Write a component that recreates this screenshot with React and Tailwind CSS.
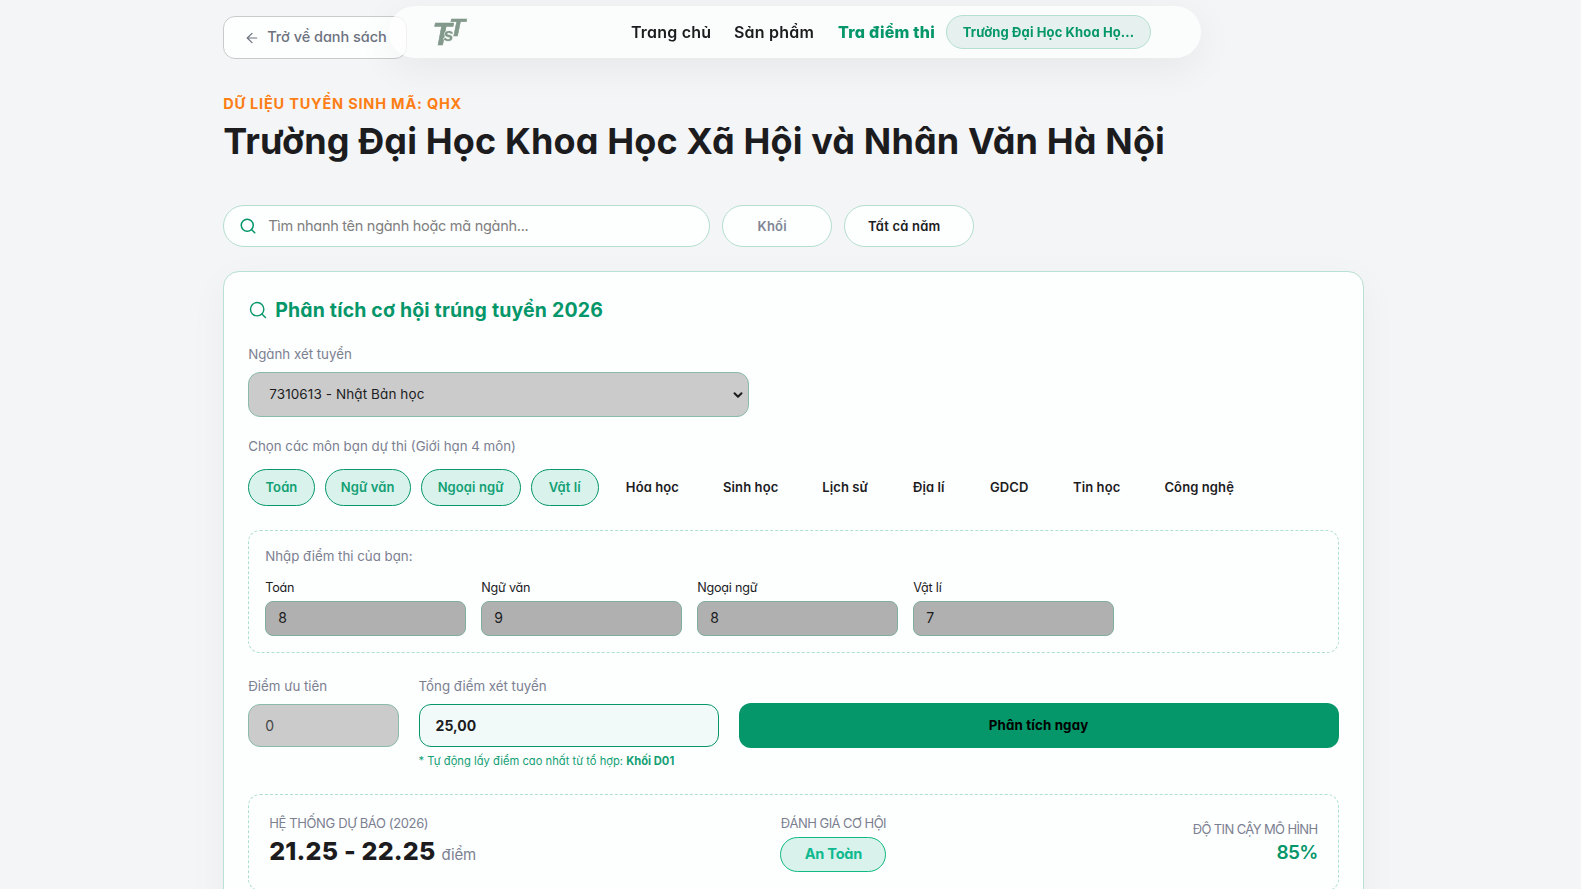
import { useState } from 'react';
import { ArrowLeft, ChevronDown, Search } from 'lucide-react';

const subjects = [
  { name: 'Toán', width: 'w-[66.5px]' },
  { name: 'Ngữ văn', width: 'w-[86px]' },
  { name: 'Ngoại ngữ', width: 'w-[100px]' },
  { name: 'Vật lí', width: 'w-[68px]' },
  { name: 'Hóa học', width: 'w-[87.5px]' },
  { name: 'Sinh học', width: 'w-[89px]' },
  { name: 'Lịch sử', width: 'w-[80px]' },
  { name: 'Địa lí', width: 'w-[67px]' },
  { name: 'GDCD', width: 'w-[74px]' },
  { name: 'Tin học', width: 'w-[81px]' },
  { name: 'Công nghệ', width: 'w-[104px]' },
];

const scores = [
  { name: 'Toán', value: '8' },
  { name: 'Ngữ văn', value: '9' },
  { name: 'Ngoại ngữ', value: '8' },
  { name: 'Vật lí', value: '7' },
];

function Logo() {
  return (
    <svg
      width="44"
      height="44"
      viewBox="0 0 44 44"
      fill="#82998b"
      fontFamily="Liberation Sans, sans-serif"
      fontWeight="700"
      fontStyle="italic"
    >
      <text x="3.5" y="34.5" fontSize="32" stroke="#82998b" strokeWidth="0.7" textLength="19" lengthAdjust="spacingAndGlyphs">T</text>
      <text x="20" y="26" fontSize="24" stroke="#82998b" strokeWidth="0.5" textLength="16" lengthAdjust="spacingAndGlyphs">T</text>
      <text x="14.5" y="31" fontSize="18" stroke="#e3eae5" strokeWidth="1.2" paintOrder="stroke">s</text>
    </svg>
  );
}

function Navbar() {
  return (
    <header className="fixed left-[389px] top-[6px] z-10 flex h-[52px] w-[812px] items-center rounded-full bg-[#fdfdfd]/75 pl-[40px] shadow-[0_10px_40px_rgba(0,0,0,0.06)]">
      <Logo />
      <nav className="ml-[158px] flex items-center whitespace-nowrap text-[16px] font-[580] leading-6 text-[#1c1c1e]">
        <a className="w-[103px] tracking-[0.2px]">Trang chủ</a>
        <a className="w-[104px] tracking-[0.2px]">Sản phẩm</a>
        <a className="w-[108px] font-extrabold tracking-[0.25px] text-[#059669]">Tra điểm thi</a>
        <a className="flex h-[34px] w-[205px] items-center justify-center rounded-full border border-[#b4dfd0] bg-[#e6f1ef] pb-px text-[13px] font-bold tracking-[0.12px] text-[#059669]">
          Trường Đại Học Khoa Họ...
        </a>
      </nav>
    </header>
  );
}

function Filters() {
  return (
    <div className="mt-[38px] flex h-[42px] gap-3">
      <div className="flex w-[486.5px] items-center gap-[11px] rounded-full border border-[#b4dfd0] bg-[#fdfefe] pl-[15px]">
        <Search size={18} strokeWidth={2} className="text-[#059669]" />
        <span className="text-[14.5px] tracking-[-0.28px] text-[#808080]">Tìm nhanh tên ngành hoặc mã ngành...</span>
      </div>
      <button className="w-[110px] rounded-full border border-[#b4dfd0] bg-[#fdfefe] pr-[9px] pt-px text-[13px] font-semibold tracking-[0.2px] text-[#808596]">
        Khối
      </button>
      <button className="w-[130px] rounded-full border border-[#b4dfd0] bg-[#fdfefe] pr-[9px] pt-px text-[13px] font-semibold tracking-[0.2px] text-[#1c1c1e]">
        Tất cả năm
      </button>
    </div>
  );
}

function Label({ children }) {
  return <div className="text-[13.3px] leading-5 text-[#7b8091]">{children}</div>;
}

function SubjectPicker({ selected, onToggle }) {
  return (
    <div className="mt-[13px] flex gap-[10px]">
      {subjects.map((s) => (
        <button
          key={s.name}
          onClick={() => onToggle(s.name)}
          className={`h-[37px] shrink-0 whitespace-nowrap rounded-full border text-[13px] font-semibold tracking-[0.1px] ${s.width} ${
            selected.includes(s.name)
              ? 'border-[#059669] bg-[#d9f2ec] text-[#12a074]'
              : 'border-transparent text-[#1c1c1e]'
          }`}
        >
          {s.name}
        </button>
      ))}
    </div>
  );
}

function Result() {
  return (
    <div className="mt-[19px] flex h-[97px] items-center justify-between rounded-xl border border-dashed border-[#aee0cf] px-[20px]">
      <div className="w-[205px] whitespace-nowrap pt-px">
        <div className="text-[13px] leading-5 tracking-[-0.37px] text-[#7b8091]">HỆ THỐNG DỰ BÁO (2026)</div>
        <div className="flex items-baseline gap-[6px] leading-9">
          <span className="text-[25px] font-extrabold tracking-[0.2px] text-[#1c1c1e]">21.25 - 22.25</span>
          <span className="text-[15px] tracking-[-0.2px] text-[#7b8091]">điểm</span>
        </div>
      </div>
      <div className="flex flex-col items-center">
        <div className="text-[13px] leading-5 tracking-[-0.55px] text-[#7b8091]">ĐÁNH GIÁ CƠ HỘI</div>
        <div className="mt-[4px] flex h-[35px] w-[106px] items-center justify-center rounded-full border border-[#10b981] bg-[#d9f2ec] pb-px text-[14.5px] font-bold tracking-[-0.2px] text-[#0fb98f]">
          An Toàn
        </div>
      </div>
      <div className="w-[125px] text-right">
        <div className="whitespace-nowrap text-[13px] leading-5 tracking-[-0.62px] text-[#7b8091]">ĐỘ TIN CẬY MÔ HÌNH</div>
        <div className="text-[19px] font-semibold leading-7 tracking-[-0.7px] text-[#059669]">85%</div>
      </div>
    </div>
  );
}

export default function App() {
  const [selected, setSelected] = useState(['Toán', 'Ngữ văn', 'Ngoại ngữ', 'Vật lí']);

  const toggle = (name) => {
    if (selected.includes(name)) {
      setSelected(selected.filter((s) => s !== name));
    } else if (selected.length < 4) {
      setSelected([...selected, name]);
    }
  };

  return (
    <div className="h-[889px] overflow-hidden bg-[#f3f5f7] font-['Inter',sans-serif] [font-feature-settings:'cv11']">
      <Navbar />
      <main className="ml-[223.2px] w-[1140.4px] pt-[16px]">
        <button className="flex h-[43px] w-[184px] items-center gap-[7px] rounded-xl border border-[#c9cacc] bg-[#fdfefe] pb-px pl-[20px] text-[14.5px] font-medium text-[#6c727f]">
          <ArrowLeft size={16} strokeWidth={1.8} className="mt-px" />
          <span className="whitespace-nowrap tracking-[-0.03px]">Trở về danh sách</span>
        </button>

        <div className="mt-[34px] text-[14.5px] font-bold leading-[22px] tracking-[0.8px] text-[#fd7e14]">
          DỮ LIỆU TUYỂN SINH MÃ: QHX
        </div>
        <h1 className="whitespace-nowrap text-[36px] font-bold leading-[52px] tracking-[0.13px] text-[#1c1c1e]">
          Trường Đại Học Khoa Học Xã Hội và Nhân Văn Hà Nội
        </h1>

        <Filters />

        <section className="mt-[24px] h-[700px] rounded-2xl border border-[#b9e0d4] bg-[#fdfefe] px-[24px] pt-[24px] shadow-[0_10px_40px_rgba(0,0,0,0.04)]">
          <h2 className="flex h-[30px] items-center gap-[7px] text-[19.5px] font-bold tracking-[0.17px] text-[#059669]">
            <Search size={20} strokeWidth={1.7} className="mb-[2px]" />
            Phân tích cơ hội trúng tuyển 2026
          </h2>

          <div className="mt-[18px]">
            <Label>Ngành xét tuyển</Label>
          </div>
          <div className="mt-[8px] flex h-[45px] w-[500.4px] items-center justify-between rounded-xl border border-[#8abba9] bg-[#cbcbcb] pl-[20px] pr-[3px] text-[13.5px] tracking-[0.1px] text-[#1c1c1e]">
            <span>7310613 - Nhật Bản học</span>
            <ChevronDown size={14} strokeWidth={3.4} />
          </div>

          <div className="mt-[19px]">
            <Label>Chọn các môn bạn dự thi (Giới hạn 4 môn)</Label>
          </div>
          <SubjectPicker selected={selected} onToggle={toggle} />

          <div className="mt-[24px] h-[123px] rounded-xl border border-dashed border-[#aee0cf] px-[16px] pt-[15px]">
            <Label>Nhập điểm thi của bạn:</Label>
            <div className="mt-[12px] flex gap-[15px]">
              {scores.map((s) => (
                <div key={s.name} className="w-[201px]">
                  <div className="text-[12.6px] leading-5 tracking-[-0.2px] text-[#1c1c1e]">{s.name}</div>
                  <div className="mt-[3px] flex h-[35px] items-center rounded-lg border border-[#7fae9d] bg-[#b0b0b0] pb-[2px] pl-[12px] text-[14px] text-[#1c1c1e]">
                    {s.value}
                  </div>
                </div>
              ))}
            </div>
          </div>

          <div className="mt-[23px] flex h-[99px]">
            <div className="w-[150.4px]">
              <Label>Điểm ưu tiên</Label>
              <div className="mt-[8px] flex h-[43px] items-center rounded-xl border border-[#8abba9] bg-[#cbcbcb] pl-[16px] text-[14px] text-[#444]">
                0
              </div>
            </div>
            <div className="ml-[20px] w-[300.4px]">
              <Label>Tổng điểm xét tuyển</Label>
              <div className="mt-[8px] flex h-[43px] items-center rounded-xl border border-[#059669] bg-[#f1faf9] pl-[16px] text-[14px] font-bold text-[#1c1c1e]">
                25,00
              </div>
              <div className="mt-[6px] whitespace-nowrap text-[11.2px] leading-4 text-[#12a074]">
                * Tự động lấy điểm cao nhất từ tổ hợp: <b>Khối D01</b>
              </div>
            </div>
            <button className="ml-[19.6px] mt-[27px] h-[45px] w-[600px] rounded-xl bg-[#059669] text-[13.3px] font-bold tracking-[0.15px] text-black">
              Phân tích ngay
            </button>
          </div>

          <Result />
        </section>
      </main>
    </div>
  );
}
